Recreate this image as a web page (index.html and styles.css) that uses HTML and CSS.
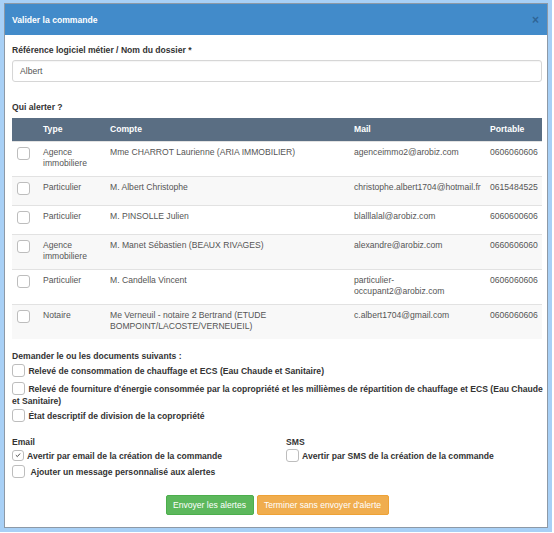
FILE: index.html
```html
<!DOCTYPE html>
<html lang="fr">
<head>
<meta charset="utf-8">
<title>Valider la commande</title>
<link rel="stylesheet" href="styles.css">
</head>
<body>
<div class="frame">
  <div class="modal">
    <div class="modal-header">
      <span class="modal-title">Valider la commande</span>
      <span class="close">×</span>
    </div>
    <div class="modal-body">
      <div class="label">Référence logiciel métier / Nom du dossier *</div>
      <div class="input">Albert</div>

      <div class="label section">Qui alerter ?</div>
      <table class="table">
        <colgroup>
          <col class="c-check"><col class="c-type"><col class="c-compte"><col class="c-mail"><col class="c-port">
        </colgroup>
        <thead>
          <tr><th></th><th>Type</th><th>Compte</th><th>Mail</th><th>Portable</th></tr>
        </thead>
        <tbody>
          <tr><td><span class="cb"></span></td><td>Agence immobiliere</td><td>Mme CHARROT Laurienne (ARIA IMMOBILIER)</td><td>agenceimmo2@arobiz.com</td><td>0606060606</td></tr>
          <tr><td><span class="cb"></span></td><td>Particulier</td><td>M. Albert Christophe</td><td class="nw">christophe.albert1704@hotmail.fr</td><td>0615484525</td></tr>
          <tr><td><span class="cb"></span></td><td>Particulier</td><td>M. PINSOLLE Julien</td><td>blalllalal@arobiz.com</td><td>6060600606</td></tr>
          <tr><td><span class="cb"></span></td><td>Agence immobiliere</td><td>M. Manet Sébastien (BEAUX RIVAGES)</td><td>alexandre@arobiz.com</td><td>0660606060</td></tr>
          <tr><td><span class="cb"></span></td><td>Particulier</td><td>M. Candella Vincent</td><td>particulier-<br>occupant2@arobiz.com</td><td>0606060606</td></tr>
          <tr><td><span class="cb"></span></td><td>Notaire</td><td>Me Verneuil - notaire 2 Bertrand (ETUDE <span class="nw">BOMPOINT/LACOSTE/VERNEUEIL)</span></td><td>c.albert1704@gmail.com</td><td>0606060606</td></tr>
        </tbody>
      </table>

      <div class="label docs-title">Demander le ou les documents suivants :</div>
      <div class="opt"><span class="cb"></span> Relevé de consommation de chauffage et ECS (Eau Chaude et Sanitaire)</div>
      <div class="opt opt-wrap"><span class="nw"><span class="cb"></span> Relevé de fourniture d'énergie consommée par la copropriété et les millièmes de répartition de chauffage et ECS (Eau Chaude</span><br>et Sanitaire)</div>
      <div class="opt"><span class="cb"></span> État descriptif de division de la copropriété</div>

      <div class="notify">
        <div class="col">
          <div class="label">Email</div>
          <div class="opt"><span class="cb checked"><svg viewBox="0 0 10 10" width="8" height="8"><path d="M2.3 5.2 L4.2 7 L7.6 3.2" fill="none" stroke="#444" stroke-width="1.2"/></svg></span> Avertir par email de la création de la commande</div>
          <div class="opt"><span class="cb"></span>&nbsp; Ajouter un message personnalisé aux alertes</div>
        </div>
        <div class="col">
          <div class="label">SMS</div>
          <div class="opt"><span class="cb"></span> Avertir par SMS de la création de la commande</div>
        </div>
      </div>

      <div class="actions">
        <button class="btn btn-success">Envoyer les alertes</button>
        <button class="btn btn-warning">Terminer sans envoyer d'alerte</button>
      </div>
    </div>
  </div>
</div>
</body>
</html>
```

FILE: styles.css
```css
* { box-sizing: border-box; }
html, body { margin: 0; padding: 0; background: #fff; }
body {
  font-family: "Liberation Sans", Arial, sans-serif;
  font-size: 8.6px;
  color: #333;
}
.frame {
  width: 552px;
  height: 532px;
  border: 4px solid #a8d0f6;
  border-top-width: 3px;
}
.modal {
  height: 100%;
  border: 1px solid #8d99a6;
  background: #fff;
}
.modal-header {
  height: 31px;
  background: #428bca;
  display: flex;
  align-items: center;
  justify-content: space-between;
  padding: 0 8px 0 7px;
}
.modal-title {
  color: #fff;
  font-weight: bold;
  font-size: 8.6px;
}
.close {
  color: #2f6596;
  font-size: 12px;
  font-weight: bold;
  line-height: 1;
}
.modal-body {
  padding: 9px 5px 0 7px;
}
.label {
  font-weight: bold;
  line-height: 12px;
  color: #333;
}
.input {
  margin-top: 4px;
  height: 22px;
  border: 1px solid #d6d6d6;
  border-radius: 3px;
  padding: 0 7px;
  line-height: 20px;
  color: #555;
  box-shadow: inset 0 1px 1px rgba(0,0,0,0.04);
}
.section { margin-top: 19px; }
.table {
  margin-top: 5px;
  width: 530px;
  border-collapse: collapse;
  table-layout: fixed;
  color: #555;
}
.c-check { width: 26px; }
.c-type { width: 67px; }
.c-compte { width: 244px; }
.c-mail { width: 136px; }
.c-port { width: 57px; }
.table th {
  background: #5a6e83;
  color: #fff;
  font-weight: bold;
  text-align: left;
  height: 23px;
  padding: 0 5px;
  line-height: 12px;
}
.table td {
  border-top: 1px solid #e2e2e2;
  padding: 5px 5px 6px;
  line-height: 11.5px;
  vertical-align: top;
}
.table td:last-child { padding-right: 2px; }
.table tbody tr:nth-child(even) td { background: #f8f8f8; }
.table td .cb { display: block; margin: 0 0 4px; }
.nw { white-space: nowrap; }
.cb {
  display: inline-block;
  width: 13px;
  height: 13px;
  border: 1px solid #bdbdbd;
  border-radius: 3px;
  background: #fff;
  vertical-align: middle;
}
.cb.checked {
  width: 12px;
  height: 11px;
  display: inline-flex;
  align-items: center;
  justify-content: center;
  margin-right: 1px;
}
.docs-title { margin-top: 11px; }
.opt {
  font-weight: bold;
  line-height: 12px;
  margin-top: 3px;
  min-height: 14px;
}
.opt-wrap { margin-top: 4px; }
.opt .cb { margin-top: -2px; margin-right: 1px; }
.notify {
  margin-top: 12px;
  display: grid;
  grid-template-columns: 274px 1fr;
}
.notify .opt { margin-top: 2px; }
.actions {
  margin-top: 15px;
  display: flex;
  justify-content: center;
  gap: 3px;
}
.btn {
  font-family: "Liberation Sans", Arial, sans-serif;
  font-size: 8.6px;
  color: #fff;
  border: 1px solid transparent;
  border-radius: 2px;
  height: 20px;
  padding: 0;
  line-height: 18px;
  white-space: nowrap;
}
.btn-success { background: #5cb85c; border-color: #4cae4c; width: 88px; }
.btn-warning { background: #f0ad4e; border-color: #eea236; width: 132px; }
```
